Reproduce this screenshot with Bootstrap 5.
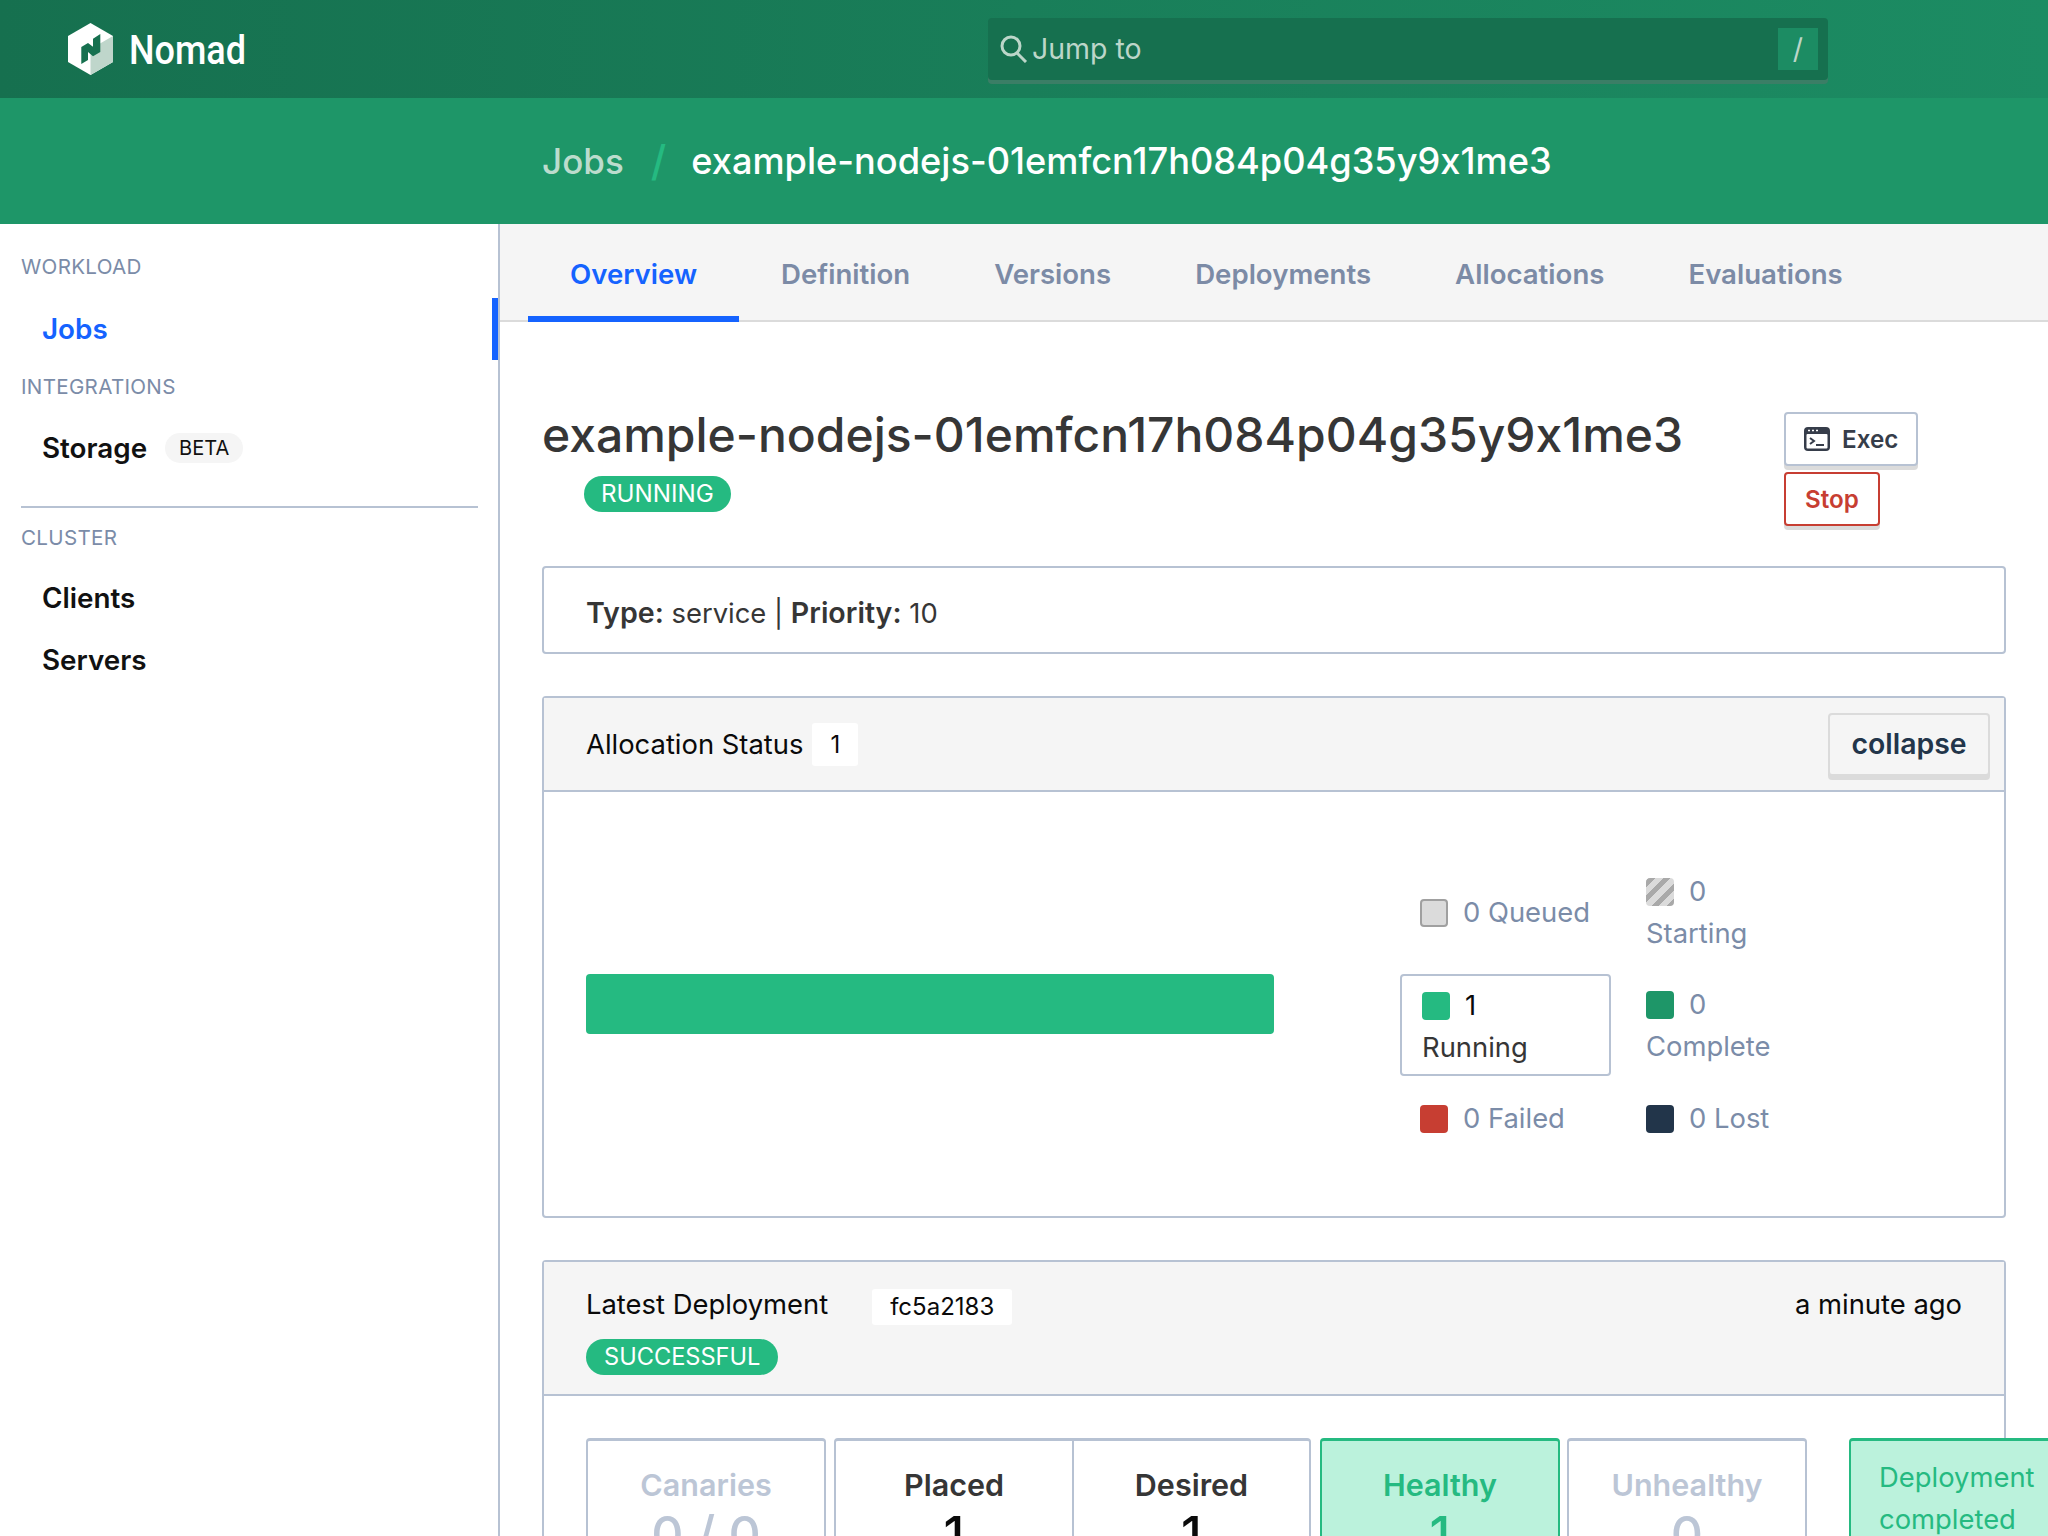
<!DOCTYPE html>
<html lang="en">
<head>
    <meta charset="UTF-8">
    <title>Nomad</title>
    <link href="https://cdn.jsdelivr.net/npm/bootstrap@5.3.0/dist/css/bootstrap.min.css" rel="stylesheet">
    <style>
        html, body { height: 100%; overflow: hidden; }
        body { font-family: Inter, "Liberation Sans", sans-serif; font-size: 27.4px; line-height: 42px; color: #363636; font-feature-settings: "calt" 0; }

        .top-bar { height: 98px; padding: 0 0 0 68px; background: linear-gradient(90deg, #16704f, #1c8c63); }
        .brand-name { font-family: Roboto, sans-serif; font-weight: 500; font-size: 40px; line-height: 1; color: #fff; margin: 3px 0 0 16px; width: 859px; transform: scaleX(.9); transform-origin: left center; }
        .jump-box { width: 840px; height: 62px; background: #16704f; border-radius: 4px; box-shadow: 0 4px 0 #3b7e66; padding: 0 10px 0 12px; color: #bcd6c9; font-size: 28.5px; }
        .jump-key { width: 40px; height: 42px; background: #1c8c63; }

        .crumb-bar { height: 126px; padding-left: 542px; background: #1e9668; font-size: 36.2px; font-weight: 500; color: #fff; }
        .crumb-dim { color: #bcdccd; font-size: 35px; }
        .crumb-sep { color: #25ba81; margin: 0 25px 0 27px; font-size: 42px; font-weight: 500; }

        .side-nav { width: 500px; flex: none; border-right: 2px solid #b7c2d3; padding-top: 28px; position: relative; }
        .side-label { font-size: 20.6px; line-height: 30px; color: #7b8ca8; padding-left: 21px; letter-spacing: .3px; }
        .side-link { display: flex; align-items: center; height: 62px; padding-left: 42px; font-size: 27.8px; font-weight: 600; color: #111; text-decoration: none; }
        .side-link.is-on { color: #1563ff; position: relative; margin-top: 16px; margin-bottom: 12px; }
        .side-link.is-on::after { content: ""; position: absolute; right: 0; top: 0; bottom: 0; width: 6px; background: #1563ff; }
        .side-link.after-storage { margin-top: 15px; }
        .side-link.after-label { margin-top: 14px; }
        .beta-tag { font-size: 20px; font-weight: 400; line-height: 30px; padding: 0 14px; background: #f5f5f5; border-radius: 15px; margin-left: 18px; }
        .side-rule { height: 2px; background: #b7c2d3; margin: 27px 20px 15px 21px; }

        .page-tabs { height: 98px; background: #f5f5f5; border-bottom: 2px solid #dbdbdb; padding-left: 28px; flex-wrap: nowrap; }
        .page-tab { height: 98px; padding: 29px 42px 0; font-size: 27.6px; font-weight: 600; color: #7c8ba6; line-height: 42px; border-bottom: 6px solid transparent; text-decoration: none; }
        .page-tab.is-on { color: #1563ff; border-bottom-color: #1563ff; }

        .main-col { width: 1548px; flex: none; }
        .main-pad { width: 1464px; margin-left: 42px; }
        .job-head { height: 244px; padding-top: 85px; }
        .job-title { font-size: 48px; line-height: 56px; font-weight: 500; margin: 0; color: #363636; white-space: nowrap; }
        .run-pill { margin: 13px 0 0 42px; height: 36px; line-height: 36px; padding: 0 17px; font-size: 24.2px; font-weight: 400; border-radius: 18px; background: #25ba81; color: #fff; display: inline-block; vertical-align: top; }
        .head-actions { width: 222px; padding-top: 5px; }
        .act-btn { display: flex; align-items: center; height: 54px; padding: 2px 18px 0; font-size: 24.2px; font-weight: 600; line-height: 1; background: #fff; border: 2px solid #b7c2d3; border-radius: 4px; box-shadow: 0 4px 0 #dbdbdb; color: #363d4a; }
        .act-btn svg { margin: -2px 12px 0 0; }
        .act-btn.is-stop { border-color: #c73e32; color: #c73e32; margin-top: 6px; padding: 2px 19px 0; }

        .info-box { border: 2px solid #b7c2d3; border-radius: 4px; height: 88px; padding: 5px 42px 0; margin-bottom: 42px; }
        .info-box b { font-size: 28.6px; font-weight: 600; }

        .box-card { border: 2px solid #b7c2d3; border-radius: 4px; margin-bottom: 42px; background: #fff; }
        .box-card > .card-header { background: #f5f5f5; border: 0; border-bottom: 2px solid #b7c2d3; border-radius: 0; padding: 0 14px 0 42px; color: #0a0a0a; }
        .alloc-head { height: 94px; }
        .count-chip { background: #fff; border-radius: 3px; height: 43px; line-height: 43px; padding: 0 18px; font-size: 24px; margin-left: 9px; }
        .fold-btn { width: 162px; height: 63px; border: 2px solid #dbdbdb; border-radius: 4px; background: #f5f5f5; box-shadow: 0 4px 0 #dbdbdb; font-size: 28.4px; font-weight: 600; line-height: 1; color: #22354a; padding: 0; }
        .alloc-body { height: 424px; padding: 0 42px; }
        .alloc-bar { width: 688px; height: 60px; background: #25ba81; border-radius: 4px; }

        .legend-grid { display: grid; grid-template-columns: 226px 226px; grid-template-rows: 102px 102px 62px; row-gap: 11px; margin: 2px 0 0 126px; color: #7b8ca8; list-style: none; padding: 0; }
        .legend-item { padding: 0 20px; align-self: center; }
        .legend-item.is-on { align-self: stretch; width: 211px; border: 2px solid #b7c2d3; border-radius: 4px; color: #363636; padding-top: 8px; }
        .legend-item.is-on span { color: #0a0a0a; }
        .legend-dot { display: inline-block; width: 28px; height: 28px; border-radius: 4px; margin-right: 15px; vertical-align: -5px; }
        .dot-queued { background: #dbdbdb; border: 2px solid #a0a0a0; }
        .dot-starting { background: repeating-linear-gradient(-45deg, #a9a9a9, #a9a9a9 5px, #dbdbdb 5px, #dbdbdb 11px); }
        .dot-running { background: #25ba81; }
        .dot-complete { background: #1e9668; }
        .dot-failed { background: #c73e32; }
        .dot-lost { background: #22354a; }

        .deploy-head { height: 134px; padding-top: 21px !important; padding-right: 42px !important; }
        .hash-chip { background: #fff; border-radius: 3px; height: 36px; line-height: 36px; padding: 0 18px; font-size: 24px; margin: 5px 0 0 44px; }
        .good-pill { height: 36px; line-height: 36px; margin-top: 14px; padding: 0 18px; font-size: 23.6px; font-weight: 400; background: #25ba81; color: #fff; border-radius: 18px; display: inline-block; }
        .deploy-body { padding: 42px 42px 0; height: 400px; }
        .stat-row { width: 1600px; }
        .stat-box { width: 240px; height: 200px; border: 2px solid #b7c2d3; border-top-width: 3px; border-radius: 4px 4px 0 0; text-align: center; font-size: 30.5px; font-weight: 600; padding-top: 23px; color: #363636; }
        .stat-box + .stat-box { margin-left: 8px; }
        .stat-box.is-joined { margin-left: 0; border-left: 0; border-top-left-radius: 0; width: 237px; }
        .stat-box.is-split { border-top-right-radius: 0; }
        .stat-val { font-size: 50px; line-height: 56px; font-weight: 500; color: #0a0a0a; }
        .stat-box.is-off, .stat-box.is-off .stat-val { color: #bcc6d6; }
        .stat-box.is-good { background: #bbf2dc; border-color: #25ba81; margin-left: 9px; }
        .stat-box.is-good + .stat-box { margin-left: 7px; }
        .stat-box.is-good, .stat-box.is-good .stat-val { color: #25ba81; }
        .done-box { margin-left: 42px; width: 320px; height: 200px; background: #bbf2dc; border: 2px solid #25ba81; border-top-width: 3px; border-radius: 4px 0 0 0; color: #25ba81; padding: 15px 28px 0; }
    </style>
</head>
<body>
    <!-- top bars -->
    <nav class="navbar top-bar d-flex align-items-center justify-content-start flex-nowrap">
        <svg width="45" height="52" viewBox="0 0 45 52">
            <path fill="#fff" d="M22.5 0 45 13v26L22.5 52 0 39V13z"/>
            <path fill="#bfd6cb" d="M22.5 52V26L45 13v26z"/>
            <path fill="#16704f" d="M13.3 24 20 20l5 3.7v-8L32.3 11v18L25 33.3 20 29v8l-6.7 4z"/>
        </svg>
        <span class="brand-name">Nomad</span>
        <div class="jump-box d-flex align-items-center">
            <svg width="28" height="28" viewBox="0 0 28 28" fill="none" stroke="#bcd6c9" stroke-width="3">
                <circle cx="11" cy="11" r="9"/><path d="M17 18l9 9"/>
            </svg>
            <span class="ms-1 flex-grow-1">Jump to</span>
            <span class="jump-key d-flex align-items-center justify-content-center">/</span>
        </div>
    </nav>
    <div class="crumb-bar d-flex align-items-center">
        <span class="crumb-dim">Jobs</span><span class="crumb-sep">/</span><span>example-nodejs-01emfcn17h084p04g35y9x1me3</span>
    </div>

    <div class="d-flex">
        <aside class="side-nav">
            <div class="side-label">WORKLOAD</div>
            <a class="side-link is-on" href="#">Jobs</a>
            <div class="side-label">INTEGRATIONS</div>
            <a class="side-link after-storage" href="#">Storage <span class="beta-tag">BETA</span></a>
            <div class="side-rule"></div>
            <div class="side-label">CLUSTER</div>
            <a class="side-link after-label" href="#">Clients</a>
            <a class="side-link" href="#">Servers</a>
        </aside>

        <main class="main-col">
            <div class="nav page-tabs">
                <a class="page-tab is-on" href="#">Overview</a>
                <a class="page-tab" href="#">Definition</a>
                <a class="page-tab" href="#">Versions</a>
                <a class="page-tab" href="#">Deployments</a>
                <a class="page-tab" href="#">Allocations</a>
                <a class="page-tab" href="#">Evaluations</a>
            </div>

            <div class="main-pad">
                <div class="job-head d-flex justify-content-between">
                    <div>
                        <h1 class="job-title">example-nodejs-01emfcn17h084p04g35y9x1me3</h1>
                        <span class="run-pill">RUNNING</span>
                    </div>
                    <div class="head-actions">
                        <button class="act-btn">
                            <svg width="26" height="24" viewBox="0 0 26 24">
                                <rect width="26" height="24" rx="4" fill="#363d4a"/>
                                <rect x="2.5" y="7" width="21" height="14.5" rx="1" fill="#fff"/>
                                <path d="M6 11l4 3-4 3" fill="none" stroke="#363d4a" stroke-width="2"/>
                                <path d="M12 18h8" stroke="#363d4a" stroke-width="2"/>
                                <path d="M4 3.5h2M8 3.5h2M12 3.5h2" stroke="#fff" stroke-width="1.6"/>
                            </svg>Exec
                        </button>
                        <button class="act-btn is-stop">Stop</button>
                    </div>
                </div>

                <div class="info-box d-flex align-items-center">
                    <div><b>Type:</b> service | <b>Priority:</b> 10</div>
                </div>

                <section class="card box-card">
                    <div class="card-header alloc-head d-flex align-items-center justify-content-between">
                        <div class="d-flex align-items-center">Allocation Status <span class="count-chip">1</span></div>
                        <button class="btn fold-btn">collapse</button>
                    </div>
                    <div class="alloc-body d-flex align-items-center">
                        <div class="alloc-bar"></div>
                        <ul class="legend-grid">
                            <li class="legend-item"><i class="legend-dot dot-queued"></i>0 Queued</li>
                            <li class="legend-item"><i class="legend-dot dot-starting"></i>0<br>Starting</li>
                            <li class="legend-item is-on"><i class="legend-dot dot-running"></i><span>1</span><br>Running</li>
                            <li class="legend-item"><i class="legend-dot dot-complete"></i>0<br>Complete</li>
                            <li class="legend-item"><i class="legend-dot dot-failed"></i>0 Failed</li>
                            <li class="legend-item"><i class="legend-dot dot-lost"></i>0 Lost</li>
                        </ul>
                    </div>
                </section>

                <section class="card box-card">
                    <div class="card-header deploy-head">
                        <div class="d-flex align-items-center justify-content-between">
                            <div class="d-flex align-items-center">Latest Deployment <span class="hash-chip">fc5a2183</span></div>
                            <div>a minute ago</div>
                        </div>
                        <span class="good-pill">SUCCESSFUL</span>
                    </div>
                    <div class="deploy-body">
                        <div class="stat-row d-flex">
                            <div class="stat-box is-off">Canaries<div class="stat-val">0 / 0</div></div>
                            <div class="stat-box is-split">Placed<div class="stat-val">1</div></div>
                            <div class="stat-box is-joined">Desired<div class="stat-val">1</div></div>
                            <div class="stat-box is-good">Healthy<div class="stat-val">1</div></div>
                            <div class="stat-box is-off">Unhealthy<div class="stat-val">0</div></div>
                            <div class="done-box">Deployment<br>completed</div>
                        </div>
                    </div>
                </section>
            </div>
        </main>
    </div>

    <script src="https://cdn.jsdelivr.net/npm/bootstrap@5.3.0/dist/js/bootstrap.bundle.min.js"></script>
</body>
</html>
